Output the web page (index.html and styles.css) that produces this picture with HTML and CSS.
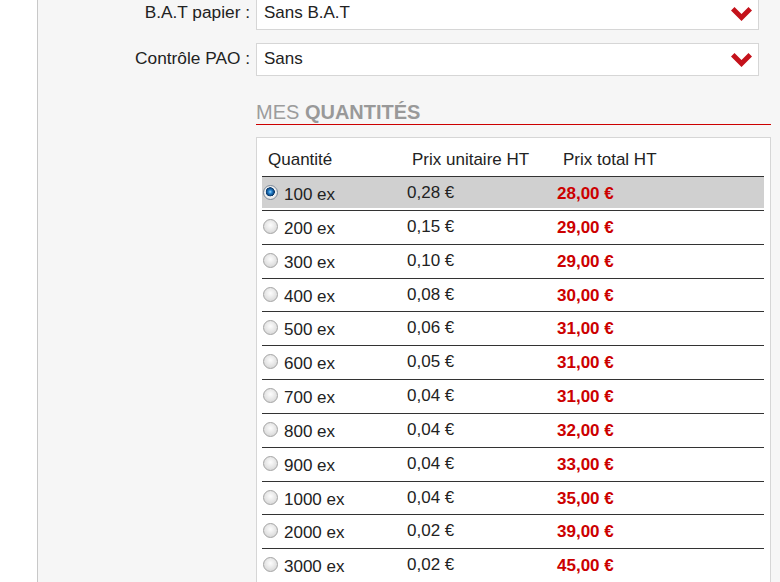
FILE: index.html
```html
<!DOCTYPE html>
<html lang="fr">
<head>
    <meta charset="UTF-8">
    <meta name="viewport" content="width=device-width, initial-scale=1.0">
    <title>Mes quantités</title>
    <link rel="stylesheet" href="styles.css">
</head>
<body>
    <div class="page">
        <div class="gutter"></div>
        <div class="panel">
            <div class="options">
                <div class="option-row">
                    <label class="option-label">B.A.T papier :</label>
                    <div class="select">
                        <span>Sans B.A.T</span>
                        <svg class="chevron" width="21" height="14" viewBox="0 0 21 14"><polygon points="0,3.5 3.5,0 10.5,7 17.5,0 21,3.5 10.5,14"/></svg>
                    </div>
                </div>
                <div class="option-row">
                    <label class="option-label">Contrôle PAO :</label>
                    <div class="select">
                        <span>Sans</span>
                        <svg class="chevron" width="21" height="14" viewBox="0 0 21 14"><polygon points="0,3.5 3.5,0 10.5,7 17.5,0 21,3.5 10.5,14"/></svg>
                    </div>
                </div>
            </div>

            <div class="quantities">
                <h2 class="section-title">MES <strong>QUANTITÉS</strong></h2>
                <div class="qty-box">
                    <div class="qty-head">
                        <span>Quantité</span>
                        <span>Prix unitaire HT</span>
                        <span>Prix total HT</span>
                    </div>

                    <div class="qty-row selected">
                        <label class="qty"><input type="radio" name="qty" checked>100 ex</label>
                        <span class="unit">0,28 €</span>
                        <span class="total">28,00 €</span>
                    </div>
                    <div class="qty-row">
                        <label class="qty"><input type="radio" name="qty">200 ex</label>
                        <span class="unit">0,15 €</span>
                        <span class="total">29,00 €</span>
                    </div>
                    <div class="qty-row">
                        <label class="qty"><input type="radio" name="qty">300 ex</label>
                        <span class="unit">0,10 €</span>
                        <span class="total">29,00 €</span>
                    </div>
                    <div class="qty-row">
                        <label class="qty"><input type="radio" name="qty">400 ex</label>
                        <span class="unit">0,08 €</span>
                        <span class="total">30,00 €</span>
                    </div>
                    <div class="qty-row">
                        <label class="qty"><input type="radio" name="qty">500 ex</label>
                        <span class="unit">0,06 €</span>
                        <span class="total">31,00 €</span>
                    </div>
                    <div class="qty-row">
                        <label class="qty"><input type="radio" name="qty">600 ex</label>
                        <span class="unit">0,05 €</span>
                        <span class="total">31,00 €</span>
                    </div>
                    <div class="qty-row">
                        <label class="qty"><input type="radio" name="qty">700 ex</label>
                        <span class="unit">0,04 €</span>
                        <span class="total">31,00 €</span>
                    </div>
                    <div class="qty-row">
                        <label class="qty"><input type="radio" name="qty">800 ex</label>
                        <span class="unit">0,04 €</span>
                        <span class="total">32,00 €</span>
                    </div>
                    <div class="qty-row">
                        <label class="qty"><input type="radio" name="qty">900 ex</label>
                        <span class="unit">0,04 €</span>
                        <span class="total">33,00 €</span>
                    </div>
                    <div class="qty-row">
                        <label class="qty"><input type="radio" name="qty">1000 ex</label>
                        <span class="unit">0,04 €</span>
                        <span class="total">35,00 €</span>
                    </div>
                    <div class="qty-row">
                        <label class="qty"><input type="radio" name="qty">2000 ex</label>
                        <span class="unit">0,02 €</span>
                        <span class="total">39,00 €</span>
                    </div>
                    <div class="qty-row">
                        <label class="qty"><input type="radio" name="qty">3000 ex</label>
                        <span class="unit">0,02 €</span>
                        <span class="total">45,00 €</span>
                    </div>
                </div>
            </div>
        </div>
    </div>
</body>
</html>
```

FILE: styles.css
```css
body {
    margin: 0;
    font-family: "Liberation Sans", Arial, sans-serif;
    color: #222;
    background: #fff;
    overflow: hidden;
}
.page {
    display: flex;
    height: 582px;
    overflow: hidden;
}
.gutter {
    width: 37px;
    flex: none;
}
.panel {
    flex: 1;
    background: #f6f6f6;
    border-left: 1px solid #c8c8c8;
}
.options {
    display: flex;
    flex-direction: column;
    gap: 13px;
    margin-top: -3px;
}
.option-row {
    display: grid;
    grid-template-columns: 212px 503px;
    column-gap: 6px;
}
.option-label {
    text-align: right;
    font-size: 17.3px;
    line-height: 31px;
    color: #222;
}
.select {
    box-sizing: border-box;
    height: 33px;
    display: flex;
    align-items: center;
    justify-content: space-between;
    padding: 0 6px 1px 7px;
    background: #fff;
    border: 1px solid #d6d6d6;
    font-size: 17px;
    line-height: 30px;
}
.chevron {
    fill: #c4121b;
    margin-top: 2px;
}
.quantities {
    margin-left: 218px;
    width: 515px;
}
.section-title {
    margin: 26px 0 12px;
    padding-bottom: 2px;
    border-bottom: 1px solid #c00;
    font-size: 20px;
    line-height: 20px;
    font-weight: normal;
    color: #9c9c9c;
}
.section-title strong {
    color: #999;
}
.qty-box {
    background: #fff;
    border: 1px solid #d6d6d6;
    padding-bottom: 10px;
}
.qty-head,
.qty-row {
    display: grid;
    grid-template-columns: 145px 150px 1fr;
    margin: 0 6px 0 5px;
}
.qty-head {
    padding: 13px 0 7px;
    font-size: 17px;
    line-height: 18px;
}
.qty-head span {
    padding-left: 6px;
}
.qty-head span:nth-child(2) {
    padding-left: 5px;
}
.qty-row {
    height: 30.85px;
    border-top: 1px solid #333;
    margin-bottom: 2px;
    font-size: 17px;
    line-height: 20px;
}
.qty-row.selected {
    background: #d0d0d0;
}
.qty {
    display: flex;
    align-items: flex-start;
    padding-top: 8px;
}
.qty input {
    appearance: none;
    width: 15px;
    height: 15px;
    margin: 0 6px 0 1px;
    border: 1px solid #a4a4a4;
    border-radius: 50%;
    background: radial-gradient(circle at 50% 40%, #fdfdfd 0, #e4e4e4 55%, #cbcbcb 100%);
    flex: none;
}
.qty input:checked {
    border-color: #7d8a99;
    background: radial-gradient(circle at 48% 45%, #a8dcff 0, #2b8ad4 1.6px, #114f8c 3.4px, #0c3a6a 4.3px, #f2f2f2 4.8px, #dadada 100%);
}
.unit {
    padding-top: 6px;
}
.total {
    padding-top: 7px;
    font-weight: bold;
    color: #c00;
}
```
